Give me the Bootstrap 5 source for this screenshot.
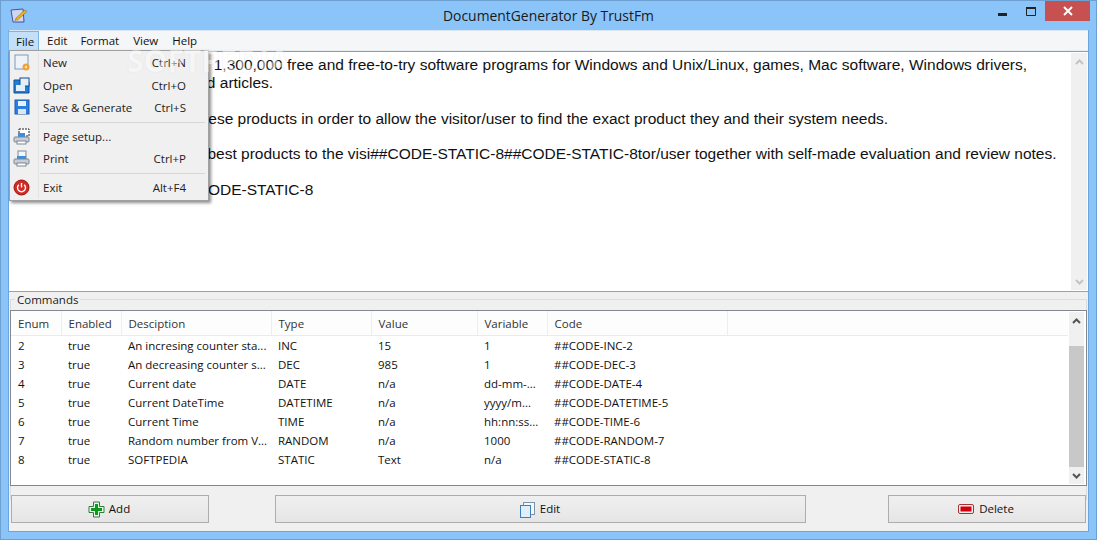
<!DOCTYPE html>
<html lang="en"><head><meta charset="utf-8"><title>DocumentGenerator By TrustFm</title>
<link href="https://cdn.jsdelivr.net/npm/bootstrap@5.3.0/dist/css/bootstrap.min.css" rel="stylesheet">
<style>
html,body{margin:0;height:540px;overflow:hidden}
body{font-family:"Open Sans","Noto Sans",sans-serif;font-size:11.5px;color:#111;background:#8ac4f9}
.appwin{width:1097px;height:540px;position:relative;border:1px solid #6d9fd0;background:#8ac4f9}
.titlebar{height:29px}
.apptitle{font-size:13.9px;color:#1a1a1a;padding-top:5px;line-height:20px;width:100%;text-align:center}
.appicon{position:absolute;left:9px;top:7px}
.ctrls{position:absolute;right:6px;top:0;height:20px}
.closebtn{width:45px;height:20px;background:#c75050;color:#fff}
.ctl{width:28px;height:20px}
.client{margin:0 7px;width:1081px;height:502px;background:#f0f0f0;border:1px solid #6ca5dc;border-top:0;position:relative}
.menubar{height:21px;background:#f5f6f7;border-top:1px solid #d9e6f2;border-bottom:1px solid #e8edf2}
.mitem{height:20px;line-height:19px;padding:0 7px;color:#111}
.mitem.on{background:#c4e0f8;border:1px solid #7db4e6;padding:0 6px 0 7px;width:31px;margin-left:-1px}
.mitem.on + .mitem{padding:0 6px 0 8px}
.editor{height:241px;background:#fff;border-top:1px solid #6ca5dc;border-bottom:1px solid #a0a0a0;position:relative;font-family:"Liberation Sans",sans-serif;font-size:15.5px;line-height:18px;color:#111}
.edtext{padding:4px 0 0 4px;width:1059px}
.edtext p{margin:0 0 17.6px}
.vsb{position:absolute;top:1px;right:1px;bottom:1px;width:16px;background:#f0f0f0}
.arrow{position:absolute;left:0;right:0;height:17px}
.arrow.up{top:0}.arrow.dn{bottom:0}
.wm{position:absolute;left:118px;top:13px;font-size:30px;line-height:36px;font-weight:700;color:#fff;opacity:.45;font-family:"Open Sans",sans-serif;text-shadow:0 0 1px #bbb;z-index:6}
.grp{position:relative;height:203px}
.grpline{position:absolute;left:1px;right:1px;top:7px;bottom:-5px;border:1px solid #dcdcdc;border-bottom:0}
.grplabel{position:absolute;left:6px;top:0;background:#f0f0f0;padding:0 2px;line-height:16px;color:#222}
.lstbox{position:absolute;left:1px;top:18px;width:1077px;height:176px;background:#fff;border:1px solid #828790}
table.cmd{table-layout:fixed;width:1057px;margin:0;border-collapse:collapse;font-size:11.5px}
table.cmd th,table.cmd td{padding:0 0 0 7px;border:0;white-space:nowrap;overflow:hidden;font-weight:400;background:transparent;color:#111}
table.cmd th{height:24px;background:#fdfdfd;border-right:1px solid #e9eff5;border-bottom:1px solid #e4edf5;line-height:22px;color:#333}
table.cmd th:last-child{border-right:0}
table.cmd td{height:19px;line-height:19px}
.lvsb{position:absolute;right:2px;top:1px;bottom:1px;width:15px;background:#f0f0f0}
.thumb{position:absolute;left:0;right:0;top:34px;height:121px;background:#c8c8c8}
.btnrow{position:absolute;left:2px;right:2px;top:465px;height:28px}
.wbtn{height:28px;border:1px solid #adadad;border-radius:0;background:linear-gradient(#f0f0f0,#e5e5e5);padding:0 2px 0 0;font-size:11.5px;color:#111;line-height:1}
.w198{width:198px}.w531{width:531px;margin-left:66px}
.pushr{margin-left:auto}
.dropmenu{position:absolute;left:0;top:20px;width:200px;height:151px;background:#f0f0f0;border:1px solid #a0a0a0;box-shadow:2px 2px 3px rgba(0,0,0,.45);z-index:5;padding:1px 0 0}
.gutter{position:absolute;left:28px;top:2px;bottom:2px;border-left:1px solid #e2e3e3}
.mrow{height:23px;line-height:21px;position:relative;padding-left:33px;padding-right:22px;color:#222}
.mrow svg{position:absolute;left:3px;top:2px}
.mrow.r22{height:22px}
.msep{height:1px;background:#d7d7d7;margin:2px 3px 3px 30px}
</style></head><body>
<div class="appwin">
 <div class="titlebar d-flex position-relative">
  <svg class="appicon" width="18" height="16" viewBox="0 0 18 16"><path d="M1 2l12-1 1 13H3z" fill="#cfd6ee" stroke="#4b4f9e"/><path d="M6 10l9-8 2 1.500-9 8-3 1z" fill="#f0b020" stroke="#a07010" stroke-width=".6"/></svg>
  <div class="apptitle">DocumentGenerator By TrustFm</div>
  <div class="ctrls d-flex align-items-center">
   <div class="ctl d-flex align-items-center justify-content-center"><svg width="10" height="10"><rect y="7" width="9" height="3" fill="#222"/></svg></div>
   <div class="ctl d-flex align-items-center justify-content-center"><svg width="11" height="9"><path d="M.5.5h9v8h-9z" fill="none" stroke="#222"/><rect width="10" height="2" fill="#222"/></svg></div>
   <div class="closebtn d-flex align-items-center justify-content-center"><svg width="10" height="10"><path d="M1 1l8 8M9 1l-8 8" stroke="#fff" stroke-width="2"/></svg></div>
  </div>
 </div>
 <div class="client">
  <div class="menubar d-flex">
   <div class="mitem on">File</div><div class="mitem">Edit</div><div class="mitem">Format</div><div class="mitem">View</div><div class="mitem">Help</div>
  </div>
  <div class="wm" aria-hidden="true">SOFTPEDIA</div>
  <div class="dropmenu">
   <div class="gutter"></div>
   <div class="mrow d-flex justify-content-between"><svg width="18" height="18" viewBox="0 0 18 18"><rect x="2" y="1" width="13" height="14" fill="#eef3fa" stroke="#7a99bd"/><circle cx="13" cy="13" r="3.500" fill="#eda33a"/><circle cx="13" cy="13" r="1.200" fill="#fde7b5"/></svg><span>New</span><span>Ctrl+N</span></div>
   <div class="mrow r22 d-flex justify-content-between"><svg width="18" height="18" viewBox="0 0 18 18"><path d="M1 3h6v2h9v11H1z" fill="#1e7fd8" stroke="#0d4f96"/><rect x="7" y="1" width="9" height="8" fill="#e8eef6" stroke="#0d4f96"/><rect x="3" y="8" width="9" height="6" fill="#e3f0fb"/></svg><span>Open</span><span>Ctrl+O</span></div>
   <div class="mrow d-flex justify-content-between"><svg width="18" height="18" viewBox="0 0 18 18"><rect x="2" y="1" width="14" height="14" fill="#2a7de1" stroke="#1b5fb0"/><rect x="5" y="2" width="8" height="5" fill="#e9f2fc"/><rect x="5" y="10" width="8" height="5" fill="#dfe6ee"/></svg><span>Save &amp; Generate</span><span>Ctrl+S</span></div>
   <div class="msep"></div>
   <div class="mrow r22"><svg width="18" height="18" viewBox="0 0 18 18"><rect x="6" y="1" width="10" height="7" fill="#fff" stroke="#222" stroke-dasharray="2 1"/><rect x="5" y="5" width="7" height="4" fill="#3b8fe0"/><rect x="1" y="9" width="15" height="5" rx="1" fill="#c8ced6" stroke="#7d8794"/><rect x="4" y="13" width="9" height="3" fill="#fff" stroke="#7d8794"/></svg><span>Page setup...</span></div>
   <div class="mrow d-flex justify-content-between"><svg width="18" height="18" viewBox="0 0 18 18"><rect x="5" y="1" width="8" height="8" fill="#f3f6fa" stroke="#7d8794"/><rect x="4" y="6" width="9" height="3" fill="#3b8fe0"/><rect x="1" y="9" width="15" height="5" rx="1" fill="#c8ced6" stroke="#7d8794"/><rect x="4" y="13" width="9" height="3" fill="#fff" stroke="#7d8794"/></svg><span>Print</span><span>Ctrl+P</span></div>
   <div class="msep"></div>
   <div class="mrow d-flex justify-content-between"><svg width="18" height="18" viewBox="0 0 18 18"><circle cx="8.500" cy="8.500" r="7.500" fill="#d42a24" stroke="#971510"/><path d="M5.800 5.800a4 4 0 1 0 5.400 0" fill="none" stroke="#fff" stroke-width="1.400"/><path d="M8.500 4v4.500" stroke="#fff" stroke-width="1.400"/></svg><span>Exit</span><span>Alt+F4</span></div>
  </div>
  <div class="editor">
   <div class="edtext">
    <p>Softpedia is&nbsp; a library of over 1,300,000 free and free-to-try software programs for Windows and Unix/Linux, games, Mac software, Windows drivers, mobile devices and IT-related articles.</p>
    <p>We review and categorize these products in order to allow the visitor/user to find the exact product they and their system needs.</p>
    <p>We strive to deliver only the best products to the visi##CODE-STATIC-8##CODE-STATIC-8tor/user together with self-made evaluation and review notes.</p>
    <p>Text ##CODE-STATIC-8##CODE-STATIC-8</p>
   </div>
   <div class="vsb">
    <div class="arrow up d-flex justify-content-center align-items-center"><svg width="9" height="6"><path d="M1 5l3.500-3.500L8 5" fill="none" stroke="#c4c4c4" stroke-width="2"/></svg></div>
    <div class="arrow dn d-flex justify-content-center align-items-center"><svg width="9" height="6"><path d="M1 1l3.500 3.500L8 1" fill="none" stroke="#c4c4c4" stroke-width="2"/></svg></div>
   </div>
  </div>
  <div class="grp">
   <div class="grpline"></div>
   <div class="grplabel">Commands</div>
   <div class="lstbox">
    <table class="table cmd">
     <colgroup><col style="width:50px"><col style="width:60px"><col style="width:150px"><col style="width:100px"><col style="width:106px"><col style="width:70px"><col style="width:180px"><col></colgroup>
     <thead><tr><th>Enum</th><th>Enabled</th><th>Desciption</th><th>Type</th><th>Value</th><th>Variable</th><th>Code</th><th></th></tr></thead>
     <tbody>
      <tr><td>2</td><td>true</td><td>An incresing counter sta...</td><td>INC</td><td>15</td><td>1</td><td>##CODE-INC-2</td><td></td></tr>
      <tr><td>3</td><td>true</td><td>An decreasing counter s...</td><td>DEC</td><td>985</td><td>1</td><td>##CODE-DEC-3</td><td></td></tr>
      <tr><td>4</td><td>true</td><td>Current date</td><td>DATE</td><td>n/a</td><td>dd-mm-...</td><td>##CODE-DATE-4</td><td></td></tr>
      <tr><td>5</td><td>true</td><td>Current DateTime</td><td>DATETIME</td><td>n/a</td><td>yyyy/m...</td><td>##CODE-DATETIME-5</td><td></td></tr>
      <tr><td>6</td><td>true</td><td>Current Time</td><td>TIME</td><td>n/a</td><td>hh:nn:ss...</td><td>##CODE-TIME-6</td><td></td></tr>
      <tr><td>7</td><td>true</td><td>Random number from V...</td><td>RANDOM</td><td>n/a</td><td>1000</td><td>##CODE-RANDOM-7</td><td></td></tr>
      <tr><td>8</td><td>true</td><td>SOFTPEDIA</td><td>STATIC</td><td>Text</td><td>n/a</td><td>##CODE-STATIC-8</td><td></td></tr>
     </tbody>
    </table>
    <div class="lvsb">
     <div class="arrow up d-flex justify-content-center align-items-center"><svg width="9" height="6"><path d="M1 5l3.500-3.500L8 5" fill="none" stroke="#555" stroke-width="2"/></svg></div>
     <div class="thumb"></div>
     <div class="arrow dn d-flex justify-content-center align-items-center"><svg width="9" height="6"><path d="M1 1l3.500 3.500L8 1" fill="none" stroke="#555" stroke-width="2"/></svg></div>
    </div>
   </div>
  </div>
  <div class="btnrow d-flex">
   <button type="button" class="btn wbtn w198 d-flex align-items-center justify-content-center gap-1"><svg width="17" height="17" viewBox="0 0 17 17"><path d="M5.500 1h6v4.500H16v6h-4.500V16h-6v-4.500H1v-6h4.500z" fill="#eaf6ea" stroke="#2f7d3c" stroke-linejoin="round"/><path d="M7 3h3v4h4v3h-4v4H7v-4H3V7h4z" fill="#0a9a1e"/></svg>Add</button>
   <button type="button" class="btn wbtn w531 d-flex align-items-center justify-content-center gap-1"><svg width="17" height="17" viewBox="0 0 17 17"><rect x="4.500" y="1.500" width="11" height="12" fill="#f4f8fc" stroke="#7c94ab"/><rect x="1.500" y="4.500" width="10" height="12" fill="#dfeefb" stroke="#3f7fb5"/></svg>Edit</button>
   <button type="button" class="btn wbtn w198 pushr d-flex align-items-center justify-content-center gap-1"><svg width="17" height="12" viewBox="0 0 17 12"><rect x=".5" y="1.500" width="15" height="9" rx="1.500" fill="#fbeaea" stroke="#a83232"/><rect x="2.500" y="3.500" width="11" height="5" fill="#d0000f"/></svg>Delete</button>
  </div>
 </div>
</div>
</body></html>
